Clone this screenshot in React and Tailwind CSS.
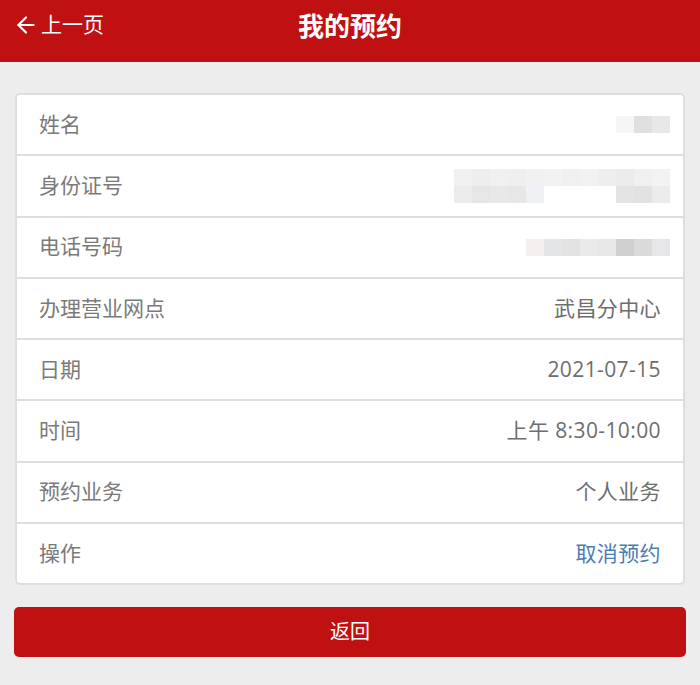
import { ArrowLeft } from 'lucide-react'

// 打码块: 每块 18px, 颜色按截图取样
const MASKS = {
  name: [['#f6f6f6', '#e0e0e0', '#e8e8e8']],
  idcard: [
    ['#f1f1f1', '#eeeeee', '#f0f0f0', '#eeefef', '#f1f1f1', '#f2f2f2', '#f0f0f0', '#f2f2f2', '#eeeeee', '#ebebeb', '#f0f0f0', '#f3f3f3'],
    ['#ebebeb', '#e6e6e6', '#e8e8e8', '#e7e7e7', '#eff0f3', '#ffffff', '#ffffff', '#ffffff', '#ffffff', '#e4e4e4', '#e2e2e2', '#ececec'],
  ],
  phone: [['#f3f0ee', '#e4e5e7', '#e3e3e3', '#eaeaea', '#e8e8e8', '#d0d0d0', '#dadada', '#e6e6e8']],
}

const ROWS = [
  { label: '姓名', mask: 'name' },
  { label: '身份证号', mask: 'idcard' },
  { label: '电话号码', mask: 'phone' },
  { label: '办理营业网点', value: '武昌分中心' },
  { label: '日期', value: '2021-07-15' },
  { label: '时间', value: '上午 8:30-10:00' },
  { label: '预约业务', value: '个人业务' },
  { label: '操作', value: '取消预约', link: true },
]

function Mask({ rows }) {
  return (
    <div className="flex flex-col">
      {rows.map((row, i) => (
        <div key={i} className="flex">
          {row.map((c, j) => (
            <span key={j} className="block w-[18px] h-[17px]" style={{ background: c }} />
          ))}
        </div>
      ))}
    </div>
  )
}

export default function App() {
  return (
    <div
      className="w-[700px] h-[685px] bg-[#ededed] overflow-hidden"
      style={{ fontFamily: '"Open Sans", "Noto Sans CJK SC", sans-serif' }}
    >
      <header className="relative h-[62px] bg-[#bf1111] flex items-center justify-center">
        <button className="absolute left-[13px] top-0 h-[50px] flex items-center gap-[2px] text-white text-[21px]">
          <ArrowLeft size={26} strokeWidth={2} />
          <span>上一页</span>
        </button>
        <h1 className="-mt-[10px] text-white text-[26px] font-bold">我的预约</h1>
      </header>

      <div className="pt-[31px] px-[15px]">
        <div className="bg-white border-2 border-[#dedede] rounded-[5px] overflow-hidden">
          {ROWS.map((row, i) => {
            const last = i === ROWS.length - 1
            return (
              <div
                key={row.label}
                className={`flex items-center justify-between px-[22px] ${
                  last ? 'h-[59.25px]' : 'h-[61.25px] border-b-2 border-[#dedede]'
                }`}
              >
                <span className="text-[21px] text-[#7a7a7a]">{row.label}</span>
                {row.mask ? (
                  <div className="-mr-[9px]">
                    <Mask rows={MASKS[row.mask]} />
                  </div>
                ) : (
                  <span
                    className={`text-[21px] tracking-[0.4px] ${row.link ? 'text-[#4a7db3]' : 'text-[#6e6e6e]'}`}
                  >
                    {row.value}
                  </span>
                )}
              </div>
            )
          })}
        </div>

        <button className="mt-[22px] -mx-[1px] w-[672px] h-[50px] rounded-[5px] bg-[#bf1111] text-white text-[20px]">
          返回
        </button>
      </div>
    </div>
  )
}
